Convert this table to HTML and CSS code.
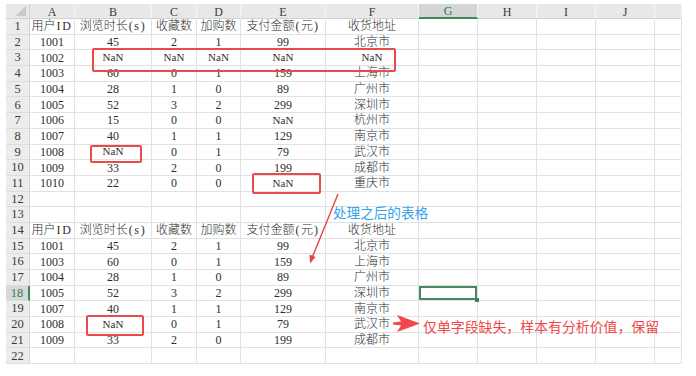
FILE: index.html
```html
<!DOCTYPE html>
<html lang="zh">
<head>
<meta charset="utf-8">
<title>Sheet</title>
<link rel="stylesheet" href="styles.css">
</head>
<body>
<div class="page">
  <div class="sheet">
    <div class="corner"></div><div class="ch">A</div><div class="ch">B</div><div class="ch">C</div><div class="ch">D</div><div class="ch">E</div><div class="ch">F</div><div class="ch sel">G</div><div class="ch">H</div><div class="ch">I</div><div class="ch">J</div><div class="ch"></div>

    <div class="rh">1</div><div class="c">用户<span class="hw">ID</span></div><div class="c">浏览时长<span class="hw">(s)</span></div><div class="c">收藏数</div><div class="c">加购数</div><div class="c">支付金额<span class="hw">(</span>元<span class="hw">)</span></div><div class="c">收货地址</div><div class="c"></div><div class="c"></div><div class="c"></div><div class="c"></div><div class="c"></div>
    <div class="rh">2</div><div class="c">1001</div><div class="c">45</div><div class="c">2</div><div class="c">1</div><div class="c">99</div><div class="c">北京市</div><div class="c"></div><div class="c"></div><div class="c"></div><div class="c"></div><div class="c"></div>
    <div class="rh">3</div><div class="c">1002</div><div class="c nan">NaN</div><div class="c nan">NaN</div><div class="c nan">NaN</div><div class="c nan">NaN</div><div class="c nan">NaN</div><div class="c"></div><div class="c"></div><div class="c"></div><div class="c"></div><div class="c"></div>
    <div class="rh">4</div><div class="c">1003</div><div class="c">60</div><div class="c">0</div><div class="c">1</div><div class="c">159</div><div class="c">上海市</div><div class="c"></div><div class="c"></div><div class="c"></div><div class="c"></div><div class="c"></div>
    <div class="rh">5</div><div class="c">1004</div><div class="c">28</div><div class="c">1</div><div class="c">0</div><div class="c">89</div><div class="c">广州市</div><div class="c"></div><div class="c"></div><div class="c"></div><div class="c"></div><div class="c"></div>
    <div class="rh">6</div><div class="c">1005</div><div class="c">52</div><div class="c">3</div><div class="c">2</div><div class="c">299</div><div class="c">深圳市</div><div class="c"></div><div class="c"></div><div class="c"></div><div class="c"></div><div class="c"></div>
    <div class="rh">7</div><div class="c">1006</div><div class="c">15</div><div class="c">0</div><div class="c">0</div><div class="c nan">NaN</div><div class="c">杭州市</div><div class="c"></div><div class="c"></div><div class="c"></div><div class="c"></div><div class="c"></div>
    <div class="rh">8</div><div class="c">1007</div><div class="c">40</div><div class="c">1</div><div class="c">1</div><div class="c">129</div><div class="c">南京市</div><div class="c"></div><div class="c"></div><div class="c"></div><div class="c"></div><div class="c"></div>
    <div class="rh">9</div><div class="c">1008</div><div class="c nan">NaN</div><div class="c">0</div><div class="c">1</div><div class="c">79</div><div class="c">武汉市</div><div class="c"></div><div class="c"></div><div class="c"></div><div class="c"></div><div class="c"></div>
    <div class="rh">10</div><div class="c">1009</div><div class="c">33</div><div class="c">2</div><div class="c">0</div><div class="c">199</div><div class="c">成都市</div><div class="c"></div><div class="c"></div><div class="c"></div><div class="c"></div><div class="c"></div>
    <div class="rh">11</div><div class="c">1010</div><div class="c">22</div><div class="c">0</div><div class="c">0</div><div class="c nan">NaN</div><div class="c">重庆市</div><div class="c"></div><div class="c"></div><div class="c"></div><div class="c"></div><div class="c"></div>
    <div class="rh">12</div><div class="c"></div><div class="c"></div><div class="c"></div><div class="c"></div><div class="c"></div><div class="c"></div><div class="c"></div><div class="c"></div><div class="c"></div><div class="c"></div><div class="c"></div>
    <div class="rh">13</div><div class="c"></div><div class="c"></div><div class="c"></div><div class="c"></div><div class="c"></div><div class="c"></div><div class="c"></div><div class="c"></div><div class="c"></div><div class="c"></div><div class="c"></div>
    <div class="rh">14</div><div class="c">用户<span class="hw">ID</span></div><div class="c">浏览时长<span class="hw">(s)</span></div><div class="c">收藏数</div><div class="c">加购数</div><div class="c">支付金额<span class="hw">(</span>元<span class="hw">)</span></div><div class="c">收货地址</div><div class="c"></div><div class="c"></div><div class="c"></div><div class="c"></div><div class="c"></div>
    <div class="rh">15</div><div class="c">1001</div><div class="c">45</div><div class="c">2</div><div class="c">1</div><div class="c">99</div><div class="c">北京市</div><div class="c"></div><div class="c"></div><div class="c"></div><div class="c"></div><div class="c"></div>
    <div class="rh">16</div><div class="c">1003</div><div class="c">60</div><div class="c">0</div><div class="c">1</div><div class="c">159</div><div class="c">上海市</div><div class="c"></div><div class="c"></div><div class="c"></div><div class="c"></div><div class="c"></div>
    <div class="rh">17</div><div class="c">1004</div><div class="c">28</div><div class="c">1</div><div class="c">0</div><div class="c">89</div><div class="c">广州市</div><div class="c"></div><div class="c"></div><div class="c"></div><div class="c"></div><div class="c"></div>
    <div class="rh sel">18</div><div class="c">1005</div><div class="c">52</div><div class="c">3</div><div class="c">2</div><div class="c">299</div><div class="c">深圳市</div><div class="c active"></div><div class="c"></div><div class="c"></div><div class="c"></div><div class="c"></div>
    <div class="rh">19</div><div class="c">1007</div><div class="c">40</div><div class="c">1</div><div class="c">1</div><div class="c">129</div><div class="c">南京市</div><div class="c"></div><div class="c"></div><div class="c"></div><div class="c"></div><div class="c"></div>
    <div class="rh">20</div><div class="c">1008</div><div class="c nan">NaN</div><div class="c">0</div><div class="c">1</div><div class="c">79</div><div class="c">武汉市</div><div class="c"></div><div class="c"></div><div class="c"></div><div class="c"></div><div class="c"></div>
    <div class="rh">21</div><div class="c">1009</div><div class="c">33</div><div class="c">2</div><div class="c">0</div><div class="c">199</div><div class="c">成都市</div><div class="c"></div><div class="c"></div><div class="c"></div><div class="c"></div><div class="c"></div>
    <div class="rh">22</div><div class="c"></div><div class="c"></div><div class="c"></div><div class="c"></div><div class="c"></div><div class="c"></div><div class="c"></div><div class="c"></div><div class="c"></div><div class="c"></div><div class="c"></div>
  </div>

  <div class="mark mark-row3"></div>
  <div class="mark mark-b9"></div>
  <div class="mark mark-e11"></div>
  <div class="mark mark-b20"></div>

  <svg class="arrows" width="696" height="376" viewBox="0 0 696 376">
    <line x1="338" y1="194" x2="312" y2="258" stroke="#e8453f" stroke-width="1.4"/>
    <polygon points="310,263.5 309.5,254.5 315.5,257" fill="#e8453f"/>
    <polygon points="420,323.5 397,315 401,321.6 393,322.6 393,324.4 401,325.4 397,332" fill="#f0474a"/>
  </svg>

  <div class="note note-blue">处理之后的表格</div>
  <div class="note note-red">仅单字段缺失，样本有分析价值，保留</div>
</div>
</body>
</html>
```

FILE: styles.css
```css
html, body {
  margin: 0;
  padding: 0;
  background: #ffffff;
}

.page {
  position: relative;
  width: 696px;
  height: 376px;
  overflow: hidden;
  padding: 4px 0 0 6px;
  box-sizing: border-box;
}

.sheet {
  display: grid;
  grid-template-columns: 24px 45px 77px 45px 44px 85px 93px 59px 59px 59px 59px 27px;
  grid-template-rows: 15px repeat(22, 15.7px);
  width: 676px;
  font-family: "Liberation Serif", "Noto Sans CJK SC", serif;
  font-size: 12px;
  font-weight: 300;
  color: #2e2e2e;
}

.sheet > div {
  box-sizing: border-box;
  border-right: 1px solid #e1e1e1;
  border-bottom: 1px solid #e1e1e1;
  display: flex;
  align-items: center;
  justify-content: center;
  white-space: nowrap;
  line-height: 1;
  overflow: hidden;
}

.hw {
  letter-spacing: 1.6px;
  padding-left: 1px;
}

.corner {
  position: relative;
  background: #e8e8e8;
  border-right-color: #d2d2d2 !important;
  border-bottom-color: #d2d2d2 !important;
}

.corner::after {
  content: "";
  position: absolute;
  right: 3px;
  bottom: 2px;
  width: 0;
  height: 0;
  border-left: 11px solid transparent;
  border-bottom: 10px solid #c9c9c9;
}

.ch {
  background: #e8e8e8;
  color: #3a3a3a;
  border-right-color: #f4f4f4 !important;
  border-bottom-color: #d2d2d2 !important;
  padding-top: 1px;
}

.ch.sel {
  background: #d6d6d6;
  color: #2f7a4d;
  border-bottom: 2px solid #3c8a5c !important;
}

.rh {
  background: #ececec;
  color: #3a3a3a;
  border-right-color: #d2d2d2 !important;
  border-bottom-color: #dddddd !important;
  font-size: 12.5px;
}

.rh.sel {
  background: #d8d8d8;
  color: #2f7a4d;
  border-right: 2px solid #3c8a5c !important;
}

.nan {
  font-size: 11px;
}

.c.active {
  position: relative;
  overflow: visible;
  box-shadow: inset 0 0 0 2px #4a8a62;
  z-index: 1;
}

.c.active::after {
  content: "";
  position: absolute;
  right: -2px;
  bottom: -2px;
  width: 4px;
  height: 4px;
  background: #3f7d56;
}

.mark {
  position: absolute;
  border: 2px solid #ea4a4d;
  border-radius: 2px;
  box-sizing: border-box;
}

.mark-row3 { left: 92px; top: 48px; width: 304px; height: 24px; }
.mark-b9 { left: 90px; top: 145px; width: 52px; height: 18px; }
.mark-e11 { left: 252px; top: 173px; width: 69px; height: 21px; }
.mark-b20 { left: 86px; top: 315px; width: 58px; height: 21px; }

.arrows {
  position: absolute;
  left: 0;
  top: 0;
  pointer-events: none;
}

.note {
  position: absolute;
  font-family: "Noto Sans CJK SC", "Noto Sans", sans-serif;
  white-space: nowrap;
  line-height: 1;
}

.note-blue {
  left: 333px;
  top: 206px;
  font-size: 13.6px;
  color: #35a4ee;
}

.note-red {
  left: 423px;
  top: 320px;
  font-size: 13.9px;
  color: #f0474a;
}
```
